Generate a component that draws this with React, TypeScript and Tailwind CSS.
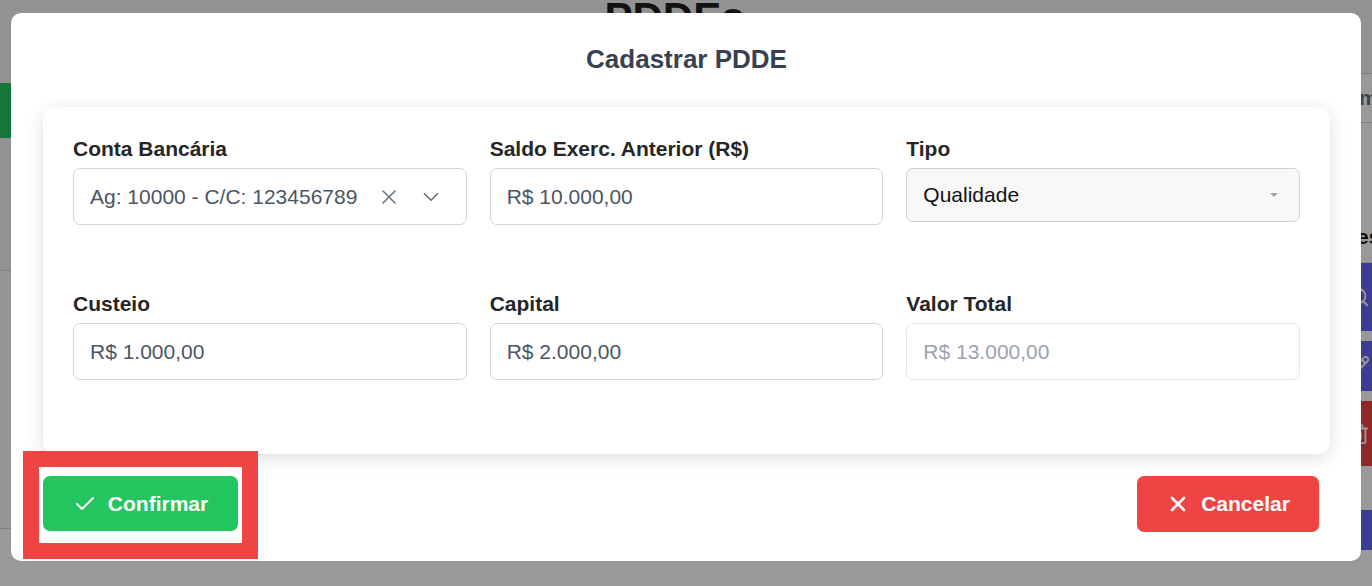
import { Check, ChevronDown, Search, Pencil, Trash2, X } from "lucide-react";
import React from "react";

type FieldProps = {
  label: string;
  value: string;
  disabled?: boolean;
};

const Field = ({ label, value, disabled }: FieldProps) => {
  return (
    <div className="flex flex-col">
      <label className="text-[21px] leading-[28px] font-bold text-[#262626] mb-[5px]">
        {label}
      </label>
      <div
        className={
          disabled
            ? "h-[57px] rounded-[7px] border border-[#e5e7eb] bg-white flex items-center pl-[16px] text-[21px] text-[#9ca3af]"
            : "h-[57px] rounded-[7px] border border-[#d1d5db] bg-white flex items-center pl-[16px] text-[21px] text-[#4b5563]"
        }
      >
        {value}
      </div>
    </div>
  );
};

const BackgroundPage = () => {
  return (
    <div className="flex h-full w-full bg-[#f3f4f6]">
      <div className="flex-1 flex flex-col">
        <h1 className="text-center text-[42px] leading-none font-bold text-[#1f1f1f] -mt-[3px] pl-[36px]">
          PDDEs
        </h1>
        <div className="mt-[44px] h-[55px] w-[160px] -ml-[149px] bg-[#22c55e]" />
        <div className="mt-[132px] border-t border-[#d4d4d4] h-[258px] bg-[#fafafa]" />
        <div className="border-t border-[#d4d4d4] flex-1 bg-white" />
      </div>
      <div className="w-[59px] flex flex-col">
        <div className="h-[73px]" />
        <div className="h-[50px] border-y border-[#d4d4d4] bg-white flex items-center pl-[46px] text-[21px] font-bold text-[#6b7280]">
          m
        </div>
        <div className="h-[89px] bg-white" />
        <div className="h-[50px] bg-white flex items-center pl-[44px] text-[21px] font-bold text-[#111]">
          es
        </div>
        <div className="h-[262px] bg-white border-t border-[#e5e7eb] flex flex-col items-end gap-[10px]">
          <div className="h-[68px] w-[59px] bg-[#6366f1] flex items-center justify-end pr-[2px] text-white">
            <Search size={22} />
          </div>
          <div className="h-[50px] w-[59px] bg-[#6366f1] flex items-center justify-end pr-[2px] text-white">
            <Pencil size={22} />
          </div>
          <div className="h-[65px] w-[59px] bg-[#ef4444] flex items-center justify-end pr-[2px] text-white">
            <Trash2 size={22} />
          </div>
        </div>
        <div className="flex-1 bg-white border-t border-[#e5e7eb] flex flex-col">
          <div className="-mt-[15px] h-[40px] w-[59px] bg-[#6366f1] flex items-end justify-center">
            <div className="w-[22px] h-[14px] rounded-t-full border-2 border-b-0 border-white" />
          </div>
        </div>
      </div>
    </div>
  );
};

const App = () => {
  return (
    <div className="relative h-[586px] w-full overflow-hidden font-['Liberation_Sans',Arial,sans-serif]">
      <BackgroundPage />
      <div className="absolute inset-0 bg-black/40" />

      <div className="absolute left-[11px] top-[13px] w-[1350px] h-[548px] rounded-[10px] bg-white flex flex-col pl-[32px] pr-[31px]">
        <h2 className="pt-[30px] text-center text-[26px] leading-[32px] font-bold text-[#374151]">
          Cadastrar PDDE
        </h2>

        <div className="mt-[32px] rounded-xl bg-white shadow-[0_4px_18px_rgba(0,0,0,0.13)] px-[30px] pt-[28px] pb-[74px] grid grid-cols-3 gap-x-[23px] gap-y-[65px]">
          <div className="flex flex-col">
            <label className="text-[21px] leading-[28px] font-bold text-[#262626] mb-[5px]">
              Conta Bancária
            </label>
            <div className="h-[57px] rounded-[7px] border border-[#d1d5db] bg-white flex items-center pl-[16px] pr-[22px] text-[21px] text-[#4b5563]">
              <span className="flex-1">Ag: 10000 - C/C: 123456789</span>
              <X size={24} strokeWidth={1.6} className="text-[#6b7280]" />
              <ChevronDown size={26} strokeWidth={1.6} className="ml-[17px] text-[#6b7280]" />
            </div>
          </div>

          <Field label="Saldo Exerc. Anterior (R$)" value="R$ 10.000,00" />

          <div className="flex flex-col">
            <label className="text-[21px] leading-[28px] font-bold text-[#262626] mb-[5px]">
              Tipo
            </label>
            <div className="h-[54px] rounded-[7px] border border-[#cfcfcf] bg-[#f8f8f8] flex items-center pl-[16px] pr-[21px] text-[21px] text-[#111]">
              <span className="flex-1">Qualidade</span>
              <div className="w-0 h-0 border-l-[4px] border-r-[4px] border-t-[4px] border-l-transparent border-r-transparent border-t-[#a3a3a3]" />
            </div>
          </div>

          <Field label="Custeio" value="R$ 1.000,00" />
          <Field label="Capital" value="R$ 2.000,00" />
          <Field label="Valor Total" value="R$ 13.000,00" disabled />
        </div>

        <div className="mt-[22px] flex items-start justify-between pr-[11px]">
          <div className="relative">
            <button className="h-[55px] w-[195px] rounded-[7px] bg-[#22c55e] text-white text-[21px] font-bold flex items-center justify-center gap-[11px]">
              <Check size={24} strokeWidth={2} />
              Confirmar
            </button>
            <div className="absolute -left-[20px] -top-[25px] w-[235px] h-[108px] border-[16px] border-[#ef4444] pointer-events-none" />
          </div>
          <button className="h-[56px] w-[182px] rounded-[7px] bg-[#ef4444] text-white text-[21px] font-bold flex items-center justify-center gap-[11px]">
            <X size={24} strokeWidth={2.6} />
            Cancelar
          </button>
        </div>
      </div>
    </div>
  );
};

export default App;
